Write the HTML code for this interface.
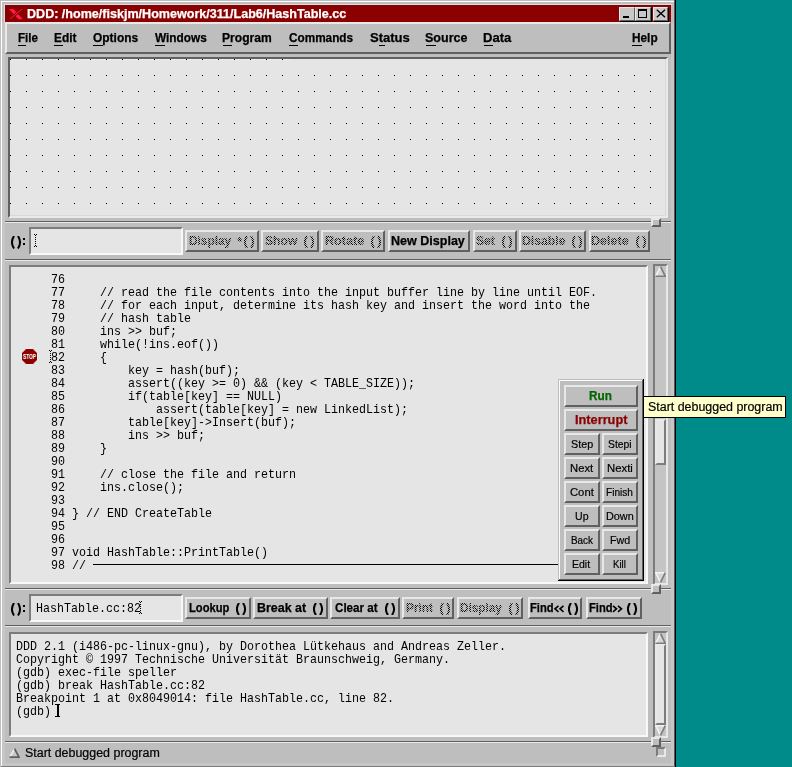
<!DOCTYPE html>
<html><head><meta charset="utf-8"><style>
html,body{margin:0;padding:0}
body{width:792px;height:767px;overflow:hidden;background:#008b8b;position:relative}
body>div,body>span,body>svg,.dis>span,.dis>svg{position:absolute;box-sizing:content-box}
.t{white-space:pre;line-height:15px}
.f{transform-origin:0 0}
.par{-webkit-text-stroke:0.5px currentColor}
.bs{-webkit-text-stroke:0.25px currentColor}
.rs{-webkit-text-stroke:0.2px currentColor}
.m{font:13px 'Liberation Mono', monospace;line-height:13px;transform:scaleX(0.89744);transform-origin:0 0}
.dis .bs{-webkit-text-stroke:0.2px #000}
.dis{-webkit-mask-image:conic-gradient(#000 25%,transparent 0 50%,#000 0 75%,transparent 0);-webkit-mask-size:2px 2px}
</style></head><body>
<div style="left:0px;top:0px;width:676px;height:767px;background:#bebebe"></div>
<div style="left:1px;top:1px;width:673px;height:1px;background:#fff"></div>
<div style="left:1px;top:1px;width:1px;height:766px;background:#fff"></div>
<div style="left:2px;top:23px;width:3px;height:743px;background:#c6c6c6"></div>
<div style="left:671px;top:23px;width:3px;height:743px;background:#c6c6c6"></div>
<div style="left:2px;top:763px;width:672px;height:3px;background:#c6c6c6"></div>
<div style="left:674px;top:0px;width:1px;height:767px;background:#555"></div>
<div style="left:675px;top:0px;width:1px;height:767px;background:#000"></div>
<div style="left:4px;top:4px;width:668px;height:1px;background:#d3dede"></div>
<div style="left:4px;top:4px;width:1px;height:19px;background:#d3dede"></div>
<div style="left:5px;top:5px;width:666px;height:17px;background:#8b0000"></div>
<svg style="left:8px;top:8px" width="16" height="13" viewBox="0 0 16 13"><polygon points="1,1 5.3,1 15,11.2 10.4,11.2" fill="#ff1a4a"/><line x1="2.2" y1="10.8" x2="13.9" y2="1.2" stroke="#8b0000" stroke-width="2.6"/><line x1="2.2" y1="10.8" x2="13.9" y2="1.2" stroke="#ff1a4a" stroke-width="1"/></svg>
<span class="t f  bs" style="left:26.95px;top:7.00px;font:bold 12px 'Liberation Sans', sans-serif;color:#fff;transform:scaleX(1.0461)">DDD: /home/fiskjm/Homework/311/Lab6/HashTable.cc</span>
<div style="left:619px;top:7px;width:14px;height:12px;border:1px solid;border-color:#e8e8e8 #606060 #606060 #e8e8e8;background:#c8c8c8;box-shadow:1px 1px 0 #000"></div>
<div style="left:635px;top:7px;width:14px;height:12px;border:1px solid;border-color:#e8e8e8 #606060 #606060 #e8e8e8;background:#c8c8c8;box-shadow:1px 1px 0 #000"></div>
<div style="left:653px;top:7px;width:13px;height:12px;border:1px solid;border-color:#e8e8e8 #606060 #606060 #e8e8e8;background:#c8c8c8;box-shadow:1px 1px 0 #000"></div>
<div style="left:623px;top:16px;width:6px;height:2px;background:#000"></div>
<div style="left:638px;top:9px;width:9px;height:9px;border:1px solid #000;box-sizing:border-box;border-top-width:2px"></div>
<svg style="left:656px;top:9px" width="10" height="9" viewBox="0 0 10 9"><path d="M0.8 0.8 L9 8.2 M9 0.8 L0.8 8.2" stroke="#000" stroke-width="1.4"/></svg>
<div style="left:5px;top:22px;width:666px;height:2px;background:#e8e8e8"></div>
<div style="left:5px;top:22px;width:662px;height:28px;border:2px solid;border-color:#e8e8e8 #606060 #606060 #e8e8e8;"></div>
<span class="t f  bs" style="left:17.53px;top:31.00px;font:bold 12px 'Liberation Sans', sans-serif;color:#000;transform:scaleX(0.9684)">File</span>
<span class="t f  bs" style="left:53.51px;top:31.00px;font:bold 12px 'Liberation Sans', sans-serif;color:#000;transform:scaleX(0.9909)">Edit</span>
<span class="t f  bs" style="left:93.40px;top:31.00px;font:bold 12px 'Liberation Sans', sans-serif;color:#000;transform:scaleX(0.9956)">Options</span>
<span class="t f  bs" style="left:155.00px;top:31.00px;font:bold 12px 'Liberation Sans', sans-serif;color:#000;transform:scaleX(0.9865)">Windows</span>
<span class="t f  bs" style="left:222.39px;top:31.00px;font:bold 12px 'Liberation Sans', sans-serif;color:#000;transform:scaleX(1.0062)">Program</span>
<span class="t f  bs" style="left:289.40px;top:31.00px;font:bold 12px 'Liberation Sans', sans-serif;color:#000;transform:scaleX(0.9800)">Commands</span>
<span class="t f  bs" style="left:369.71px;top:31.00px;font:bold 12px 'Liberation Sans', sans-serif;color:#000;transform:scaleX(1.0857)">Status</span>
<span class="t f  bs" style="left:425.46px;top:31.00px;font:bold 12px 'Liberation Sans', sans-serif;color:#000;transform:scaleX(1.0436)">Source</span>
<span class="t f  bs" style="left:483.41px;top:31.00px;font:bold 12px 'Liberation Sans', sans-serif;color:#000;transform:scaleX(1.0880)">Data</span>
<span class="t f  bs" style="left:631.52px;top:31.00px;font:bold 12px 'Liberation Sans', sans-serif;color:#000;transform:scaleX(0.9840)">Help</span>
<div style="left:18px;top:45px;width:8px;height:1px;background:#000"></div>
<div style="left:54px;top:45px;width:9px;height:1px;background:#000"></div>
<div style="left:93px;top:45px;width:10px;height:1px;background:#000"></div>
<div style="left:155px;top:45px;width:10px;height:1px;background:#000"></div>
<div style="left:223px;top:45px;width:9px;height:1px;background:#000"></div>
<div style="left:289px;top:45px;width:9px;height:1px;background:#000"></div>
<div style="left:379px;top:45px;width:6px;height:1px;background:#000"></div>
<div style="left:426px;top:45px;width:10px;height:1px;background:#000"></div>
<div style="left:484px;top:45px;width:9px;height:1px;background:#000"></div>
<div style="left:632px;top:45px;width:10px;height:1px;background:#000"></div>
<div style="left:8px;top:57px;width:656px;height:157px;border:2px solid;border-color:#7c7c7c #f8f8f8 #f8f8f8 #7c7c7c;background:#e5e5e5;border-color:#606060 #e9e9e9 #e9e9e9 #606060"></div>
<div style="left:10px;top:215px;width:656px;height:1px;background:#d9d9d9"></div>
<div style="left:665px;top:59px;width:1px;height:157px;background:#d9d9d9"></div>
<div style="left:10px;top:59px;width:280px;height:1px;background:#ededed"></div>
<svg style="left:10px;top:59px" width="655" height="156"><defs><pattern id="dp" width="16" height="16" patternUnits="userSpaceOnUse"><rect x="0" y="0" width="1" height="1" fill="#000"/></pattern></defs><rect width="655" height="156" fill="url(#dp)"/></svg>
<div style="left:290px;top:59px;width:375px;height:1px;background:#e5e5e5"></div>
<div style="left:5px;top:221px;width:666px;height:1px;background:#606060"></div>
<div style="left:5px;top:222px;width:666px;height:1px;background:#e8e8e8"></div>
<div style="left:651px;top:218px;width:6px;height:5px;border:2px solid;border-color:#e8e8e8 #606060 #606060 #e8e8e8;background:#bebebe;"></div>
<svg style="left:11px;top:236px" width="11" height="13"><path d="M3,0 C0.333,4.2 0.333,8.6 3,12.5 M7,0 C9.667,4.2 9.667,8.6 7,12.5" stroke="#000" stroke-width="2" fill="none"/></svg>
<div style="left:23px;top:238px;width:2px;height:2px;background:#000"></div>
<div style="left:23px;top:243px;width:2px;height:2px;background:#000"></div>
<div style="left:29px;top:227px;width:150px;height:24px;border:2px solid;border-color:#7c7c7c #f8f8f8 #f8f8f8 #7c7c7c;background:#e5e5e5;"></div>
<svg style="left:34px;top:234px" width="3" height="13"><rect x="0" y="0" width="1" height="1"/><rect x="2" y="0" width="1" height="1"/><rect x="1" y="1" width="1" height="1"/><rect x="1" y="3" width="1" height="1"/><rect x="1" y="5" width="1" height="1"/><rect x="1" y="7" width="1" height="1"/><rect x="1" y="9" width="1" height="1"/><rect x="1" y="11" width="1" height="1"/><rect x="0" y="12" width="1" height="1"/><rect x="2" y="12" width="1" height="1"/></svg>
<div style="left:185px;top:230px;width:70px;height:18px;border:2px solid;border-color:#e8e8e8 #606060 #606060 #e8e8e8;background:#bebebe;"></div>
<div class="dis" style="left:185px;top:230px;width:74px;height:22px">
<span class="t f  bs" style="left:3.91px;top:4.00px;font:bold 12px 'Liberation Sans', sans-serif;color:#000;transform:scaleX(0.9881)">Display</span>
<span class="t f  bs" style="left:52.60px;top:5.00px;font:bold 12px 'Liberation Sans', sans-serif;color:#000;transform:scaleX(1.0000)">*</span>
<svg style="position:absolute;left:59px;top:6px" width="11" height="12"><path d="M3,0 C0.333,3.8 0.333,8.2 3,12 M7,0 C9.667,3.8 9.667,8.2 7,12" stroke="#000" stroke-width="2" fill="none"/></svg>
</div>
<div style="left:261px;top:230px;width:54px;height:18px;border:2px solid;border-color:#e8e8e8 #606060 #606060 #e8e8e8;background:#bebebe;"></div>
<div class="dis" style="left:261px;top:230px;width:58px;height:22px">
<span class="t f  bs" style="left:4.09px;top:4.00px;font:bold 12px 'Liberation Sans', sans-serif;color:#000;transform:scaleX(1.0097)">Show</span>
<svg style="position:absolute;left:43px;top:6px" width="11" height="12"><path d="M3,0 C0.333,3.8 0.333,8.2 3,12 M7,0 C9.667,3.8 9.667,8.2 7,12" stroke="#000" stroke-width="2" fill="none"/></svg>
</div>
<div style="left:321px;top:230px;width:60px;height:18px;border:2px solid;border-color:#e8e8e8 #606060 #606060 #e8e8e8;background:#bebebe;"></div>
<div class="dis" style="left:321px;top:230px;width:64px;height:22px">
<span class="t f  bs" style="left:3.75px;top:4.00px;font:bold 12px 'Liberation Sans', sans-serif;color:#000;transform:scaleX(1.0528)">Rotate</span>
<svg style="position:absolute;left:50px;top:6px" width="11" height="12"><path d="M3,0 C0.333,3.8 0.333,8.2 3,12 M7,0 C9.667,3.8 9.667,8.2 7,12" stroke="#000" stroke-width="2" fill="none"/></svg>
</div>
<div style="left:388px;top:230px;width:78px;height:18px;border:2px solid;border-color:#e8e8e8 #606060 #606060 #e8e8e8;background:#bebebe;"></div>
<span class="t f  bs" style="left:390.66px;top:234.00px;font:bold 12px 'Liberation Sans', sans-serif;color:#000;transform:scaleX(1.0443)">New Display</span>
<div style="left:473px;top:230px;width:40px;height:18px;border:2px solid;border-color:#e8e8e8 #606060 #606060 #e8e8e8;background:#bebebe;"></div>
<div class="dis" style="left:473px;top:230px;width:44px;height:22px">
<span class="t f  bs" style="left:2.89px;top:4.00px;font:bold 12px 'Liberation Sans', sans-serif;color:#000;transform:scaleX(1.0056)">Set</span>
<svg style="position:absolute;left:29px;top:6px" width="11" height="12"><path d="M3,0 C0.333,3.8 0.333,8.2 3,12 M7,0 C9.667,3.8 9.667,8.2 7,12" stroke="#000" stroke-width="2" fill="none"/></svg>
</div>
<div style="left:519px;top:230px;width:63px;height:18px;border:2px solid;border-color:#e8e8e8 #606060 #606060 #e8e8e8;background:#bebebe;"></div>
<div class="dis" style="left:519px;top:230px;width:67px;height:22px">
<span class="t f  bs" style="left:3.28px;top:4.00px;font:bold 12px 'Liberation Sans', sans-serif;color:#000;transform:scaleX(1.0171)">Disable</span>
<svg style="position:absolute;left:53px;top:6px" width="11" height="12"><path d="M3,0 C0.333,3.8 0.333,8.2 3,12 M7,0 C9.667,3.8 9.667,8.2 7,12" stroke="#000" stroke-width="2" fill="none"/></svg>
</div>
<div style="left:589px;top:230px;width:57px;height:18px;border:2px solid;border-color:#e8e8e8 #606060 #606060 #e8e8e8;background:#bebebe;"></div>
<div class="dis" style="left:589px;top:230px;width:61px;height:22px">
<span class="t f  bs" style="left:2.35px;top:4.00px;font:bold 12px 'Liberation Sans', sans-serif;color:#000;transform:scaleX(1.0457)">Delete</span>
<svg style="position:absolute;left:47px;top:6px" width="11" height="12"><path d="M3,0 C0.333,3.8 0.333,8.2 3,12 M7,0 C9.667,3.8 9.667,8.2 7,12" stroke="#000" stroke-width="2" fill="none"/></svg>
</div>
<div style="left:5px;top:259px;width:666px;height:1px;background:#606060"></div>
<div style="left:5px;top:260px;width:666px;height:1px;background:#e8e8e8"></div>
<div style="left:9px;top:265px;width:635px;height:315px;border:2px solid;border-color:#7c7c7c #f8f8f8 #f8f8f8 #7c7c7c;background:#e5e5e5;"></div>
<span class="t m" style="left:50.8px;top:273px">76 </span>
<span class="t m" style="left:50.8px;top:286px">77     // read the file contents into the input buffer line by line until EOF.</span>
<span class="t m" style="left:50.8px;top:299px">78     // for each input, determine its hash key and insert the word into the</span>
<span class="t m" style="left:50.8px;top:312px">79     // hash table</span>
<span class="t m" style="left:50.8px;top:325px">80     ins &gt;&gt; buf;</span>
<span class="t m" style="left:50.8px;top:338px">81     while(!ins.eof())</span>
<span class="t m" style="left:50.8px;top:351px">82     {</span>
<span class="t m" style="left:50.8px;top:364px">83         key = hash(buf);</span>
<span class="t m" style="left:50.8px;top:377px">84         assert((key &gt;= 0) &amp;&amp; (key &lt; TABLE_SIZE));</span>
<span class="t m" style="left:50.8px;top:390px">85         if(table[key] == NULL)</span>
<span class="t m" style="left:50.8px;top:403px">86             assert(table[key] = new LinkedList);</span>
<span class="t m" style="left:50.8px;top:416px">87         table[key]-&gt;Insert(buf);</span>
<span class="t m" style="left:50.8px;top:429px">88         ins &gt;&gt; buf;</span>
<span class="t m" style="left:50.8px;top:442px">89     }</span>
<span class="t m" style="left:50.8px;top:455px">90 </span>
<span class="t m" style="left:50.8px;top:468px">91     // close the file and return</span>
<span class="t m" style="left:50.8px;top:481px">92     ins.close();</span>
<span class="t m" style="left:50.8px;top:494px">93 </span>
<span class="t m" style="left:50.8px;top:507px">94 } // END CreateTable</span>
<span class="t m" style="left:50.8px;top:520px">95 </span>
<span class="t m" style="left:50.8px;top:533px">96 </span>
<span class="t m" style="left:50.8px;top:546px">97 void HashTable::PrintTable()</span>
<span class="t m" style="left:50.8px;top:559px">98 //</span>
<div style="left:93px;top:564px;width:465px;height:1px;background:#000"></div>
<svg style="left:21px;top:348px" width="17" height="17" viewBox="0 0 17 17"><polygon points="5,0.5 12,0.5 16.5,5 16.5,12 12,16.5 5,16.5 0.5,12 0.5,5" fill="#8b0000" stroke="#e8f0f0" stroke-width="1"/><text x="2" y="10.8" font-family="Liberation Sans, sans-serif" font-weight="bold" font-size="7" fill="#fff" textLength="13" lengthAdjust="spacingAndGlyphs">STOP</text></svg>
<svg style="left:49px;top:350px" width="3" height="13"><rect x="0" y="0" width="1" height="1"/><rect x="2" y="0" width="1" height="1"/><rect x="1" y="1" width="1" height="1"/><rect x="1" y="3" width="1" height="1"/><rect x="1" y="5" width="1" height="1"/><rect x="1" y="7" width="1" height="1"/><rect x="1" y="9" width="1" height="1"/><rect x="1" y="11" width="1" height="1"/><rect x="0" y="12" width="1" height="1"/><rect x="2" y="12" width="1" height="1"/></svg>
<div style="left:653px;top:264px;width:11px;height:317px;border:2px solid;border-color:#7c7c7c #e8e8e8 #e8e8e8 #7c7c7c;background:#c4c4c4;"></div>
<svg style="left:655px;top:266px" width="11" height="11" viewBox="0 0 11 11"><polygon points="5.5,0.5 10.5,10.5 0.5,10.5" fill="#d6d6d6"/><path d="M0.7 10.3 L5.5 0.7" stroke="#f4f4f4" stroke-width="1.5"/><path d="M5.5 0.7 L10.2 10.2 L0.5 10.2" stroke="#7c7c7c" stroke-width="1.6" fill="none"/></svg>
<svg style="left:655px;top:572px" width="11" height="11" viewBox="0 0 11 11"><polygon points="0.5,0.5 10.5,0.5 5.5,10.5" fill="#d6d6d6"/><path d="M5.5 10.3 L0.7 0.8 L10.5 0.8" stroke="#f4f4f4" stroke-width="1.5" fill="none"/><path d="M10.3 0.7 L5.5 10.3" stroke="#7c7c7c" stroke-width="1.6"/></svg>
<div style="left:655px;top:419px;width:7px;height:42px;border:2px solid;border-color:#e8e8e8 #7c7c7c #7c7c7c #e8e8e8;background:#e5e5e5;"></div>
<div style="left:558px;top:379px;width:86px;height:202px;background:#bebebe"></div>
<div style="left:559px;top:380px;width:84px;height:1px;background:#fcfcfc"></div>
<div style="left:559px;top:380px;width:1px;height:200px;background:#fcfcfc"></div>
<div style="left:642px;top:380px;width:1px;height:200px;background:#606060"></div>
<div style="left:559px;top:579px;width:84px;height:1px;background:#606060"></div>
<div style="left:643px;top:379px;width:1px;height:202px;background:#000"></div>
<div style="left:558px;top:580px;width:86px;height:1px;background:#000"></div>
<div style="left:564px;top:385px;width:70px;height:18px;border:2px solid;border-color:#e8e8e8 #606060 #606060 #e8e8e8;background:#bebebe;"></div>
<span class="t f  bs" style="left:588.82px;top:389.30px;font:bold 12px 'Liberation Sans', sans-serif;color:#006400;transform:scaleX(0.9773)">Run</span>
<div style="left:564px;top:409px;width:70px;height:18px;border:2px solid;border-color:#e8e8e8 #606060 #606060 #e8e8e8;background:#bebebe;"></div>
<span class="t f  bs" style="left:574.54px;top:413.10px;font:bold 12px 'Liberation Sans', sans-serif;color:#8b0000;transform:scaleX(1.0625)">Interrupt</span>
<div style="left:564px;top:433px;width:32px;height:18px;border:2px solid;border-color:#e8e8e8 #606060 #606060 #e8e8e8;background:#bebebe;"></div>
<div style="left:602px;top:433px;width:32px;height:18px;border:2px solid;border-color:#e8e8e8 #606060 #606060 #e8e8e8;background:#bebebe;"></div>
<span class="t f  rs" style="left:570.62px;top:438.00px;font:11px 'Liberation Sans', sans-serif;color:#000;transform:scaleX(0.9810)">Step</span>
<span class="t f  rs" style="left:607.86px;top:438.00px;font:11px 'Liberation Sans', sans-serif;color:#000;transform:scaleX(0.9417)">Stepi</span>
<div style="left:564px;top:457px;width:32px;height:18px;border:2px solid;border-color:#e8e8e8 #606060 #606060 #e8e8e8;background:#bebebe;"></div>
<div style="left:602px;top:457px;width:32px;height:18px;border:2px solid;border-color:#e8e8e8 #606060 #606060 #e8e8e8;background:#bebebe;"></div>
<span class="t f  rs" style="left:569.68px;top:462.10px;font:11px 'Liberation Sans', sans-serif;color:#000;transform:scaleX(1.0238)">Next</span>
<span class="t f  rs" style="left:606.67px;top:462.10px;font:11px 'Liberation Sans', sans-serif;color:#000;transform:scaleX(1.0304)">Nexti</span>
<div style="left:564px;top:481px;width:32px;height:18px;border:2px solid;border-color:#e8e8e8 #606060 #606060 #e8e8e8;background:#bebebe;"></div>
<div style="left:602px;top:481px;width:32px;height:18px;border:2px solid;border-color:#e8e8e8 #606060 #606060 #e8e8e8;background:#bebebe;"></div>
<span class="t f  rs" style="left:569.58px;top:485.80px;font:11px 'Liberation Sans', sans-serif;color:#000;transform:scaleX(1.0227)">Cont</span>
<span class="t f  rs" style="left:605.69px;top:485.80px;font:11px 'Liberation Sans', sans-serif;color:#000;transform:scaleX(0.9143)">Finish</span>
<div style="left:564px;top:505px;width:32px;height:18px;border:2px solid;border-color:#e8e8e8 #606060 #606060 #e8e8e8;background:#bebebe;"></div>
<div style="left:602px;top:505px;width:32px;height:18px;border:2px solid;border-color:#e8e8e8 #606060 #606060 #e8e8e8;background:#bebebe;"></div>
<span class="t f  rs" style="left:574.64px;top:509.80px;font:11px 'Liberation Sans', sans-serif;color:#000;transform:scaleX(0.9615)">Up</span>
<span class="t f  rs" style="left:605.61px;top:509.80px;font:11px 'Liberation Sans', sans-serif;color:#000;transform:scaleX(0.9852)">Down</span>
<div style="left:564px;top:529px;width:32px;height:18px;border:2px solid;border-color:#e8e8e8 #606060 #606060 #e8e8e8;background:#bebebe;"></div>
<div style="left:602px;top:529px;width:32px;height:18px;border:2px solid;border-color:#e8e8e8 #606060 #606060 #e8e8e8;background:#bebebe;"></div>
<span class="t f  rs" style="left:570.70px;top:533.90px;font:11px 'Liberation Sans', sans-serif;color:#000;transform:scaleX(0.9000)">Back</span>
<span class="t f  rs" style="left:609.73px;top:533.90px;font:11px 'Liberation Sans', sans-serif;color:#000;transform:scaleX(0.9737)">Fwd</span>
<div style="left:564px;top:553px;width:32px;height:18px;border:2px solid;border-color:#e8e8e8 #606060 #606060 #e8e8e8;background:#bebebe;"></div>
<div style="left:602px;top:553px;width:32px;height:18px;border:2px solid;border-color:#e8e8e8 #606060 #606060 #e8e8e8;background:#bebebe;"></div>
<span class="t f  rs" style="left:571.94px;top:557.60px;font:11px 'Liberation Sans', sans-serif;color:#000;transform:scaleX(0.9556)">Edit</span>
<span class="t f  rs" style="left:613.12px;top:557.60px;font:11px 'Liberation Sans', sans-serif;color:#000;transform:scaleX(0.8769)">Kill</span>
<div style="left:5px;top:588px;width:666px;height:1px;background:#606060"></div>
<div style="left:5px;top:589px;width:666px;height:1px;background:#e8e8e8"></div>
<div style="left:651px;top:584px;width:6px;height:6px;border:2px solid;border-color:#e8e8e8 #606060 #606060 #e8e8e8;background:#bebebe;"></div>
<svg style="left:11px;top:603px" width="11" height="13"><path d="M3,0 C0.333,4.2 0.333,8.6 3,12.5 M7,0 C9.667,4.2 9.667,8.6 7,12.5" stroke="#000" stroke-width="2" fill="none"/></svg>
<div style="left:23px;top:605px;width:2px;height:2px;background:#000"></div>
<div style="left:23px;top:610px;width:2px;height:2px;background:#000"></div>
<div style="left:29px;top:594px;width:150px;height:24px;border:2px solid;border-color:#7c7c7c #f8f8f8 #f8f8f8 #7c7c7c;background:#e5e5e5;"></div>
<span class="t m" style="left:36px;top:602px">HashTable.cc:82</span>
<svg style="left:139px;top:601px" width="3" height="13"><rect x="0" y="0" width="1" height="1"/><rect x="2" y="0" width="1" height="1"/><rect x="1" y="1" width="1" height="1"/><rect x="1" y="3" width="1" height="1"/><rect x="1" y="5" width="1" height="1"/><rect x="1" y="7" width="1" height="1"/><rect x="1" y="9" width="1" height="1"/><rect x="1" y="11" width="1" height="1"/><rect x="0" y="12" width="1" height="1"/><rect x="2" y="12" width="1" height="1"/></svg>
<div style="left:185px;top:597px;width:62px;height:18px;border:2px solid;border-color:#e8e8e8 #606060 #606060 #e8e8e8;background:#bebebe;"></div>
<span class="t f  bs" style="left:188.97px;top:600.80px;font:bold 12px 'Liberation Sans', sans-serif;color:#000;transform:scaleX(0.9310)">Lookup</span>
<svg style="position:absolute;left:236px;top:603px" width="11" height="12"><path d="M3,0 C0.333,3.8 0.333,8.2 3,12 M7,0 C9.667,3.8 9.667,8.2 7,12" stroke="#000" stroke-width="2" fill="none"/></svg>
<div style="left:253px;top:597px;width:71px;height:18px;border:2px solid;border-color:#e8e8e8 #606060 #606060 #e8e8e8;background:#bebebe;"></div>
<span class="t f  bs" style="left:256.96px;top:600.80px;font:bold 12px 'Liberation Sans', sans-serif;color:#000;transform:scaleX(1.0370)">Break at</span>
<svg style="position:absolute;left:313px;top:603px" width="11" height="12"><path d="M3,0 C0.333,3.8 0.333,8.2 3,12 M7,0 C9.667,3.8 9.667,8.2 7,12" stroke="#000" stroke-width="2" fill="none"/></svg>
<div style="left:330px;top:597px;width:66px;height:18px;border:2px solid;border-color:#e8e8e8 #606060 #606060 #e8e8e8;background:#bebebe;"></div>
<span class="t f  bs" style="left:335.20px;top:600.80px;font:bold 12px 'Liberation Sans', sans-serif;color:#000;transform:scaleX(0.9682)">Clear at</span>
<svg style="position:absolute;left:385px;top:603px" width="11" height="12"><path d="M3,0 C0.333,3.8 0.333,8.2 3,12 M7,0 C9.667,3.8 9.667,8.2 7,12" stroke="#000" stroke-width="2" fill="none"/></svg>
<div style="left:402px;top:597px;width:48px;height:18px;border:2px solid;border-color:#e8e8e8 #606060 #606060 #e8e8e8;background:#bebebe;"></div>
<div class="dis" style="left:402px;top:597px;width:52px;height:22px">
<span class="t f  bs" style="left:4.12px;top:3.80px;font:bold 12px 'Liberation Sans', sans-serif;color:#000;transform:scaleX(0.9846)">Print</span>
<svg style="position:absolute;left:38px;top:6px" width="11" height="12"><path d="M3,0 C0.333,3.8 0.333,8.2 3,12 M7,0 C9.667,3.8 9.667,8.2 7,12" stroke="#000" stroke-width="2" fill="none"/></svg>
</div>
<div style="left:457px;top:597px;width:62px;height:18px;border:2px solid;border-color:#e8e8e8 #606060 #606060 #e8e8e8;background:#bebebe;"></div>
<div class="dis" style="left:457px;top:597px;width:66px;height:22px">
<span class="t f  bs" style="left:3.32px;top:3.80px;font:bold 12px 'Liberation Sans', sans-serif;color:#000;transform:scaleX(0.9762)">Display</span>
<svg style="position:absolute;left:52px;top:6px" width="11" height="12"><path d="M3,0 C0.333,3.8 0.333,8.2 3,12 M7,0 C9.667,3.8 9.667,8.2 7,12" stroke="#000" stroke-width="2" fill="none"/></svg>
</div>
<div style="left:528px;top:597px;width:50px;height:18px;border:2px solid;border-color:#e8e8e8 #606060 #606060 #e8e8e8;background:#bebebe;"></div>
<span class="t f  bs" style="left:529.87px;top:600.80px;font:bold 12px 'Liberation Sans', sans-serif;color:#000;transform:scaleX(0.9292)">Find</span>
<svg style="left:554px;top:605px" width="11" height="9"><path d="M4.5,0.8 1,3.8 4.5,6.8 M9.5,0.8 6,3.8 9.5,6.8" stroke="#000" stroke-width="1.6" fill="none"/></svg>
<svg style="position:absolute;left:568px;top:603px" width="11" height="12"><path d="M3,0 C0.333,3.8 0.333,8.2 3,12 M7,0 C9.667,3.8 9.667,8.2 7,12" stroke="#000" stroke-width="2" fill="none"/></svg>
<div style="left:586px;top:597px;width:52px;height:18px;border:2px solid;border-color:#e8e8e8 #606060 #606060 #e8e8e8;background:#bebebe;"></div>
<span class="t f  bs" style="left:588.77px;top:600.80px;font:bold 12px 'Liberation Sans', sans-serif;color:#000;transform:scaleX(0.9292)">Find</span>
<svg style="left:612px;top:605px" width="11" height="9"><path d="M1,0.8 4.5,3.8 1,6.8 M6,0.8 9.5,3.8 6,6.8" stroke="#000" stroke-width="1.6" fill="none"/></svg>
<svg style="position:absolute;left:627px;top:603px" width="11" height="12"><path d="M3,0 C0.333,3.8 0.333,8.2 3,12 M7,0 C9.667,3.8 9.667,8.2 7,12" stroke="#000" stroke-width="2" fill="none"/></svg>
<div style="left:5px;top:625px;width:666px;height:1px;background:#606060"></div>
<div style="left:5px;top:626px;width:666px;height:1px;background:#e8e8e8"></div>
<div style="left:9px;top:632px;width:635px;height:101px;border:2px solid;border-color:#7c7c7c #f8f8f8 #f8f8f8 #7c7c7c;background:#e5e5e5;"></div>
<span class="t m" style="left:15.5px;top:640px">DDD 2.1 (i486-pc-linux-gnu), by Dorothea L&uuml;tkehaus and Andreas Zeller.</span>
<span class="t m" style="left:15.5px;top:653px">Copyright &copy; 1997 Technische Universit&auml;t Braunschweig, Germany.</span>
<span class="t m" style="left:15.5px;top:666px">(gdb) exec-file speller</span>
<span class="t m" style="left:15.5px;top:679px">(gdb) break HashTable.cc:82</span>
<span class="t m" style="left:15.5px;top:692px">Breakpoint 1 at 0x8049014: file HashTable.cc, line 82.</span>
<span class="t m" style="left:15.5px;top:705px">(gdb) </span>
<div style="left:57px;top:704px;width:2px;height:13px;background:#000"></div>
<div style="left:55px;top:704px;width:5px;height:1px;background:#000"></div>
<div style="left:55px;top:716px;width:5px;height:1px;background:#000"></div>
<div style="left:653px;top:631px;width:11px;height:103px;border:2px solid;border-color:#7c7c7c #e8e8e8 #e8e8e8 #7c7c7c;background:#c4c4c4;"></div>
<svg style="left:655px;top:633px" width="11" height="11" viewBox="0 0 11 11"><polygon points="5.5,0.5 10.5,10.5 0.5,10.5" fill="#d6d6d6"/><path d="M0.7 10.3 L5.5 0.7" stroke="#f4f4f4" stroke-width="1.5"/><path d="M5.5 0.7 L10.2 10.2 L0.5 10.2" stroke="#7c7c7c" stroke-width="1.6" fill="none"/></svg>
<svg style="left:655px;top:725px" width="11" height="11" viewBox="0 0 11 11"><polygon points="0.5,0.5 10.5,0.5 5.5,10.5" fill="#d6d6d6"/><path d="M5.5 10.3 L0.7 0.8 L10.5 0.8" stroke="#f4f4f4" stroke-width="1.5" fill="none"/><path d="M10.3 0.7 L5.5 10.3" stroke="#7c7c7c" stroke-width="1.6"/></svg>
<div style="left:655px;top:644px;width:7px;height:77px;border:2px solid;border-color:#e8e8e8 #7c7c7c #7c7c7c #e8e8e8;background:#e5e5e5;"></div>
<div style="left:5px;top:741px;width:666px;height:1px;background:#606060"></div>
<div style="left:5px;top:742px;width:666px;height:1px;background:#e8e8e8"></div>
<div style="left:651px;top:737px;width:6px;height:6px;border:2px solid;border-color:#e8e8e8 #606060 #606060 #e8e8e8;background:#bebebe;"></div>
<div style="left:656px;top:747px;width:6px;height:6px;border:2px solid;border-color:#7c7c7c #e8e8e8 #e8e8e8 #7c7c7c;background:#bebebe;"></div>
<svg style="left:9px;top:748px" width="11" height="10" viewBox="0 0 11 10"><polygon points="5.5,0.5 10.5,9.5 0.5,9.5" fill="#c8c8c8"/><path d="M0.7 9.3 L5.5 0.7" stroke="#f0f0f0" stroke-width="1.5"/><path d="M5.5 0.7 L10 9.2 L0.5 9.2" stroke="#606060" stroke-width="1.8" fill="none"/></svg>
<span class="t f  rs" style="left:24.76px;top:746.00px;font:12px 'Liberation Sans', sans-serif;color:#000;transform:scaleX(1.0359)">Start debugged program</span>
<div style="left:1px;top:766px;width:674px;height:1px;background:#7c7c7c"></div>
<div style="left:643px;top:396px;width:143px;height:22px;background:#ffffcc;border:1px solid #000;box-sizing:border-box"></div>
<span class="t f  rs" style="left:647.76px;top:400.30px;font:12px 'Liberation Sans', sans-serif;color:#000;transform:scaleX(1.0352)">Start debugged program</span>
</body></html>
